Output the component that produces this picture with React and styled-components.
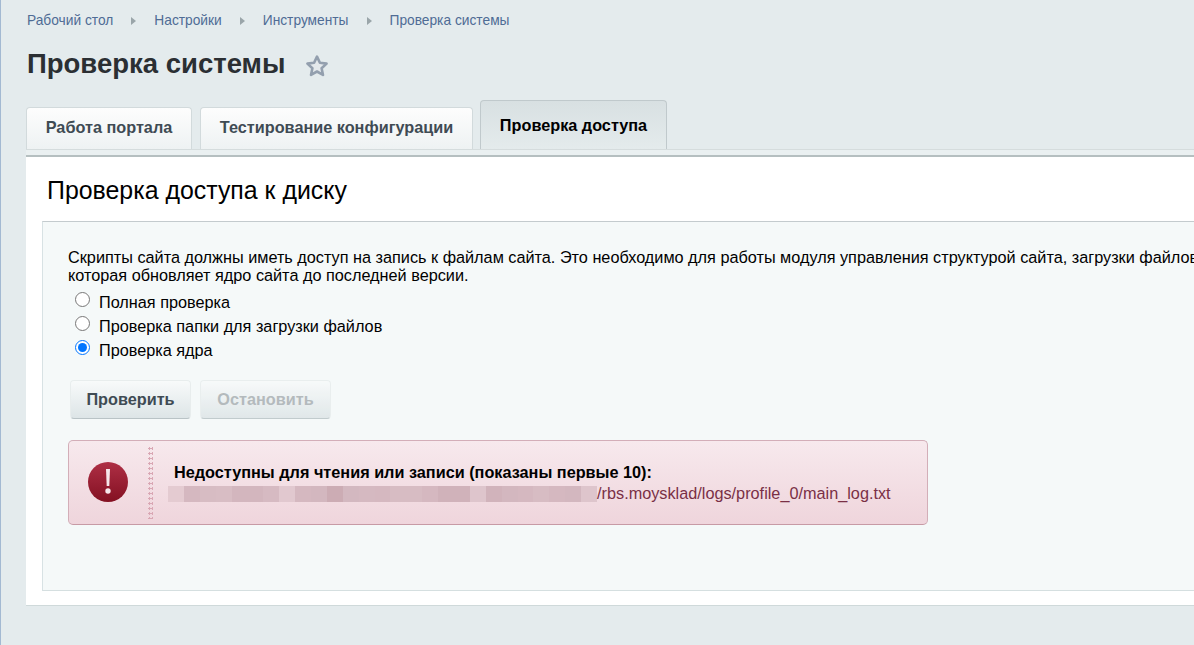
import React from "react";
import styled, { createGlobalStyle } from "styled-components";

const Global = createGlobalStyle`
  html, body { margin: 0; padding: 0; height: 100%; overflow: hidden; }
  body { font-family: "Liberation Sans", Arial, sans-serif; background: #e4ebed; }
  #root { height: 100%; }
`;

const Page = styled.div`
  width: 1194px;
  height: 645px;
  box-sizing: border-box;
  overflow: hidden;
  border-left: 1px solid #a3b9d2;
  padding: 13px 0 0 25px;
  background: #e4ebed;
`;

const Breadcrumbs = styled.nav`
  display: flex;
  align-items: center;
  height: 16px;
  margin-left: 1px;
  font-size: 13.75px;
  line-height: 16px;
  color: #4f6c95;
`;

const Crumb = styled.span`
  white-space: nowrap;
`;

const Arrow = styled.span`
  width: 0;
  height: 0;
  margin: 0 18px;
  border-left: 5px solid #9aa5a9;
  border-top: 4px solid transparent;
  border-bottom: 4px solid transparent;
`;

const TitleRow = styled.div`
  display: flex;
  align-items: center;
  margin: 17px 0 0 1px;
  height: 36px;
`;

const Title = styled.h1`
  margin: 0;
  font-size: 27.5px;
  line-height: 36px;
  font-weight: 700;
  color: #2b2f33;
`;

const Star = styled.svg`
  width: 24px;
  height: 24px;
  margin: 3px 0 0 20px;
`;

const Tabs = styled.div`
  display: flex;
  align-items: flex-end;
  gap: 8px;
  height: 49px;
  margin-top: 18px;
`;

const Tab = styled.div`
  box-sizing: border-box;
  display: flex;
  align-items: center;
  justify-content: center;
  border: 1px solid ${(p) => (p.$active ? "#c0c9cc" : "#d2dadc")};
  border-bottom: 0;
  border-radius: 4px 4px 0 0;
  font-weight: 700;
  font-size: 16.25px;
  white-space: nowrap;
  height: ${(p) => (p.$active ? "49px" : "42px")};
  padding-bottom: ${(p) => (p.$active ? "0" : "2px")};
  margin-left: ${(p) => (p.$active ? "-1px" : "0")};
  width: ${(p) => p.$w}px;
  color: ${(p) => (p.$active ? "#000" : "#3f4b54")};
  background: ${(p) =>
    p.$active
      ? "linear-gradient(#d8e0e2, #e4ebec)"
      : "linear-gradient(#fdfdfd, #eef2f3)"};
`;

const Panel = styled.div`
  width: 1300px;
  border-top: 1px solid #d5dcdd;
`;

const Strip = styled.div`
  height: 5px;
  background: #eaf0f1;
  border-bottom: 2px solid #b5bfc0;
`;

const Content = styled.div`
  box-sizing: border-box;
  height: 449px;
  padding: 19px 0 15px 16px;
  background: #fff;
  border-bottom: 1px solid #cfd9da;
`;

const Heading = styled.h2`
  margin: 0 0 0 5px;
  font-size: 24.9px;
  line-height: 28px;
  font-weight: 400;
  color: #000;
`;

const Box = styled.div`
  box-sizing: border-box;
  height: 370px;
  margin-top: 17px;
  padding: 26px 0 0 25px;
  background: #f5f9f9;
  border: 1px solid #d8e2e4;
  border-top-color: #c4cbce;
  border-bottom-color: #d5dfe0;
  border-right: 0;
`;

const Text = styled.p`
  margin: 0;
  font-size: 16.25px;
  line-height: 18px;
  color: #000;
  white-space: nowrap;
`;

const RadioList = styled.div`
  display: flex;
  flex-direction: column;
  margin-top: 6px;
`;

const RadioRow = styled.label`
  display: flex;
  align-items: center;
  height: 24px;
  font-size: 16.25px;
  color: #000;
`;

const RadioInput = styled.input`
  width: 15px;
  height: 15px;
  margin: 0 9px 5px 7px;
  accent-color: #0075ff;
`;

const Buttons = styled.div`
  display: flex;
  gap: 9px;
  margin: 18px 0 0 2px;
`;

const Button = styled.div`
  box-sizing: border-box;
  display: flex;
  align-items: center;
  justify-content: center;
  width: ${(p) => p.$w}px;
  height: 39px;
  border-radius: 4px;
  font-size: 16.25px;
  font-weight: 700;
  color: ${(p) => (p.$disabled ? "#a9b0b3" : "#3f4b54")};
  background: linear-gradient(#f8fafa, #dde5e7);
  border: 1px solid #e8eded;
  border-bottom: 1px solid #b9c3c6;
  opacity: ${(p) => (p.$disabled ? 0.85 : 1)};
`;

const Alert = styled.div`
  box-sizing: border-box;
  display: flex;
  width: 860px;
  height: 85px;
  margin-top: 21px;
  border: 1px solid #d3aeb8;
  border-bottom-color: #c79aa5;
  border-radius: 5px;
  background: linear-gradient(#f7e9ed, #efd5dc);
`;

const AlertIcon = styled.div`
  display: flex;
  align-items: center;
  justify-content: center;
  box-sizing: border-box;
  width: 79px;
  padding: 0 2px 1px 0;
  flex: none;
`;

const Dots = styled.div`
  width: 5px;
  margin: 5px 0;
  flex: none;
  background-image: radial-gradient(circle, #d9a7b4 1px, transparent 1.2px);
  background-size: 3px 5px;
`;

const AlertBody = styled.div`
  padding: 21px 0 0 15px;
  font-size: 16.25px;
  line-height: 21px;
`;

const AlertTitle = styled.div`
  padding-left: 6px;
  font-weight: 700;
  color: #000;
  white-space: nowrap;
`;

const PathRow = styled.div`
  display: flex;
  align-items: center;
  color: #7a3046;
  white-space: nowrap;
`;

const Blur = styled.span`
  width: 15.9px;
  height: 16px;
  flex: none;
`;

const shades = [
  "#e4cbd1","#d5b8c0","#d7bcc3","#d8bdc4","#d3b6be","#d3b6be","#d6bac2","#e1c8cf","#d5b8c0","#d3b7bf",
  "#ccacb4","#d3b8c0","#d5b9c1","#d5b8c0","#d7bcc3","#d7bcc3","#d5b8c0","#d0b2ba","#d0b2ba","#dec5cc",
  "#d1b3bb","#d3b7bf","#d5b8c0","#d7bcc3","#d5b8c0","#d3b7bf","#dec5cc",
];

export default function App() {
  return (
    <Page>
      <Global />
      <Breadcrumbs>
        <Crumb>Рабочий стол</Crumb>
        <Arrow />
        <Crumb>Настройки</Crumb>
        <Arrow />
        <Crumb>Инструменты</Crumb>
        <Arrow />
        <Crumb>Проверка системы</Crumb>
      </Breadcrumbs>
      <TitleRow>
        <Title>Проверка системы</Title>
        <Star viewBox="0 0 24 24">
          <path
            d="M12 2.6l2.9 6.2 6.7.8-5 4.6 1.4 6.7-6-3.4-6 3.4 1.4-6.7-5-4.6 6.7-.8z"
            fill="#e4e9ec"
            stroke="#939fae"
            strokeWidth="2.6"
            strokeLinejoin="round"
          />
        </Star>
      </TitleRow>
      <Tabs>
        <Tab $w={166}>Работа портала</Tab>
        <Tab $w={273}>Тестирование конфигурации</Tab>
        <Tab $w={187} $active>Проверка доступа</Tab>
      </Tabs>
      <Panel>
        <Strip />
        <Content>
          <Heading>Проверка доступа к диску</Heading>
          <Box>
            <Text>
              Скрипты сайта должны иметь доступ на запись к файлам сайта. Это необходимо для работы модуля управления структурой сайта, загрузки файлов
              <br />
              которая обновляет ядро сайта до последней версии.
            </Text>
            <RadioList>
              <RadioRow><RadioInput type="radio" name="check" readOnly />Полная проверка</RadioRow>
              <RadioRow><RadioInput type="radio" name="check" readOnly />Проверка папки для загрузки файлов</RadioRow>
              <RadioRow><RadioInput type="radio" name="check" defaultChecked />Проверка ядра</RadioRow>
            </RadioList>
            <Buttons>
              <Button $w={121}>Проверить</Button>
              <Button $w={131} $disabled>Остановить</Button>
            </Buttons>
            <Alert>
              <AlertIcon>
                <svg width="42" height="42" viewBox="0 0 42 42">
                  <defs>
                    <linearGradient id="err" x1="0" y1="0" x2="0" y2="1">
                      <stop offset="0" stopColor="#ae2f45" />
                      <stop offset="1" stopColor="#841022" />
                    </linearGradient>
                  </defs>
                  <circle cx="21" cy="21" r="20" fill="url(#err)" />
                  <path d="M19 8h4l-.7 17h-2.6z" fill="#f6e6ea" />
                  <circle cx="21" cy="30" r="2.7" fill="#f6e6ea" />
                </svg>
              </AlertIcon>
              <Dots />
              <AlertBody>
                <AlertTitle>Недоступны для чтения или записи (показаны первые 10):</AlertTitle>
                <PathRow>
                  {shades.map((c, i) => (
                    <Blur key={i} style={{ background: c }} />
                  ))}
                  /rbs.moysklad/logs/profile_0/main_log.txt
                </PathRow>
              </AlertBody>
            </Alert>
          </Box>
        </Content>
      </Panel>
    </Page>
  );
}
